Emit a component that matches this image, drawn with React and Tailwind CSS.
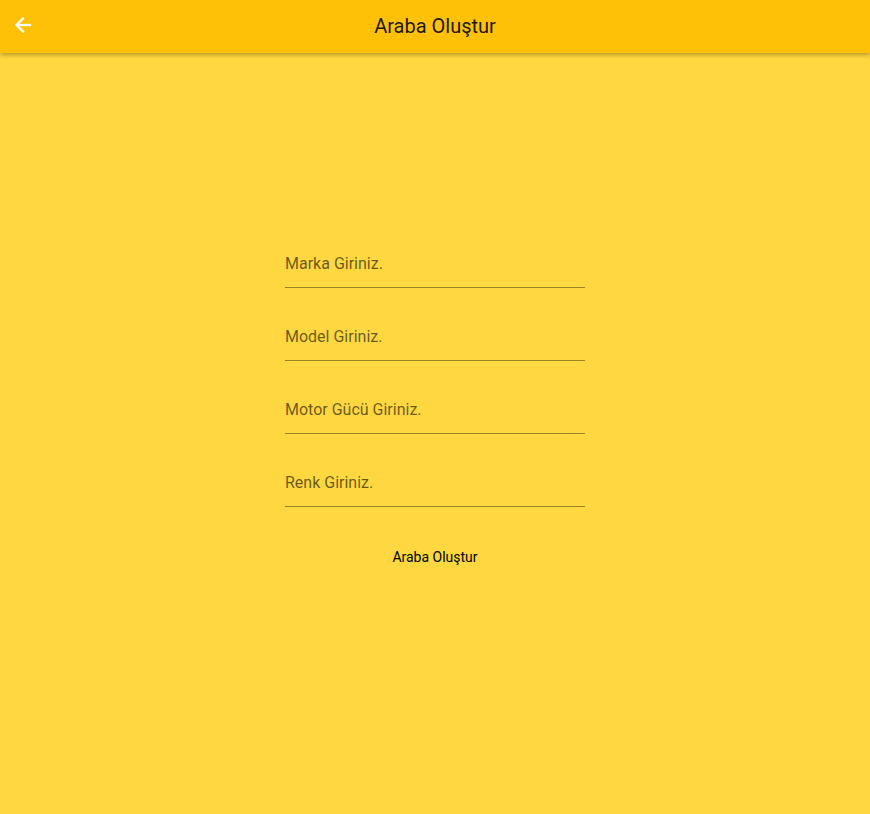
import { useId } from "react";

const fields = ["Marka Giriniz.", "Model Giriniz.", "Motor Gücü Giriniz.", "Renk Giriniz."];

function TextField({ label }) {
  const id = useId();
  return (
    <div className="grid items-center">
      <input
        id={id}
        type="text"
        placeholder=" "
        className="peer col-start-1 row-start-1 h-12 w-full border-b border-black/40 bg-transparent text-base text-black outline-none focus:border-black"
      />
      <label
        htmlFor={id}
        className="invisible col-start-1 row-start-1 cursor-text text-base text-black/60 peer-placeholder-shown:visible"
      >
        {label}
      </label>
    </div>
  );
}

export default function App() {
  return (
    <div className="flex min-h-screen flex-col bg-[#ffd740] font-['Roboto',sans-serif] text-black">
      <header className="grid h-[53px] grid-cols-[46px_1fr_46px] items-center bg-[#ffc107] pb-0.5 shadow-[0_2px_4px_-1px_rgba(0,0,0,0.2),0_3px_4px_0_rgba(0,0,0,0.12)]">
        <button type="button" aria-label="Geri" className="flex h-12 items-center justify-center pb-0.5 text-white">
          <svg viewBox="0 0 24 24" className="size-6" fill="currentColor" stroke="currentColor" strokeWidth="0.3" aria-hidden="true">
            <path d="M20 11H7.83l5.59-5.59L12 4l-8 8 8 8 1.41-1.41L7.83 13H20v-2z" />
          </svg>
        </button>
        <h1 className="text-center text-xl text-black/90">Araba Oluştur</h1>
      </header>
      <main className="flex flex-1 flex-col items-center justify-center pb-[52px]">
        <form className="flex w-[300px] flex-col gap-[25px]">
          {fields.map((label) => (
            <TextField key={label} label={label} />
          ))}
          <button type="button" className="mt-[7px] h-9 self-center px-2 text-sm">Araba Oluştur</button>
        </form>
      </main>
    </div>
  );
}
